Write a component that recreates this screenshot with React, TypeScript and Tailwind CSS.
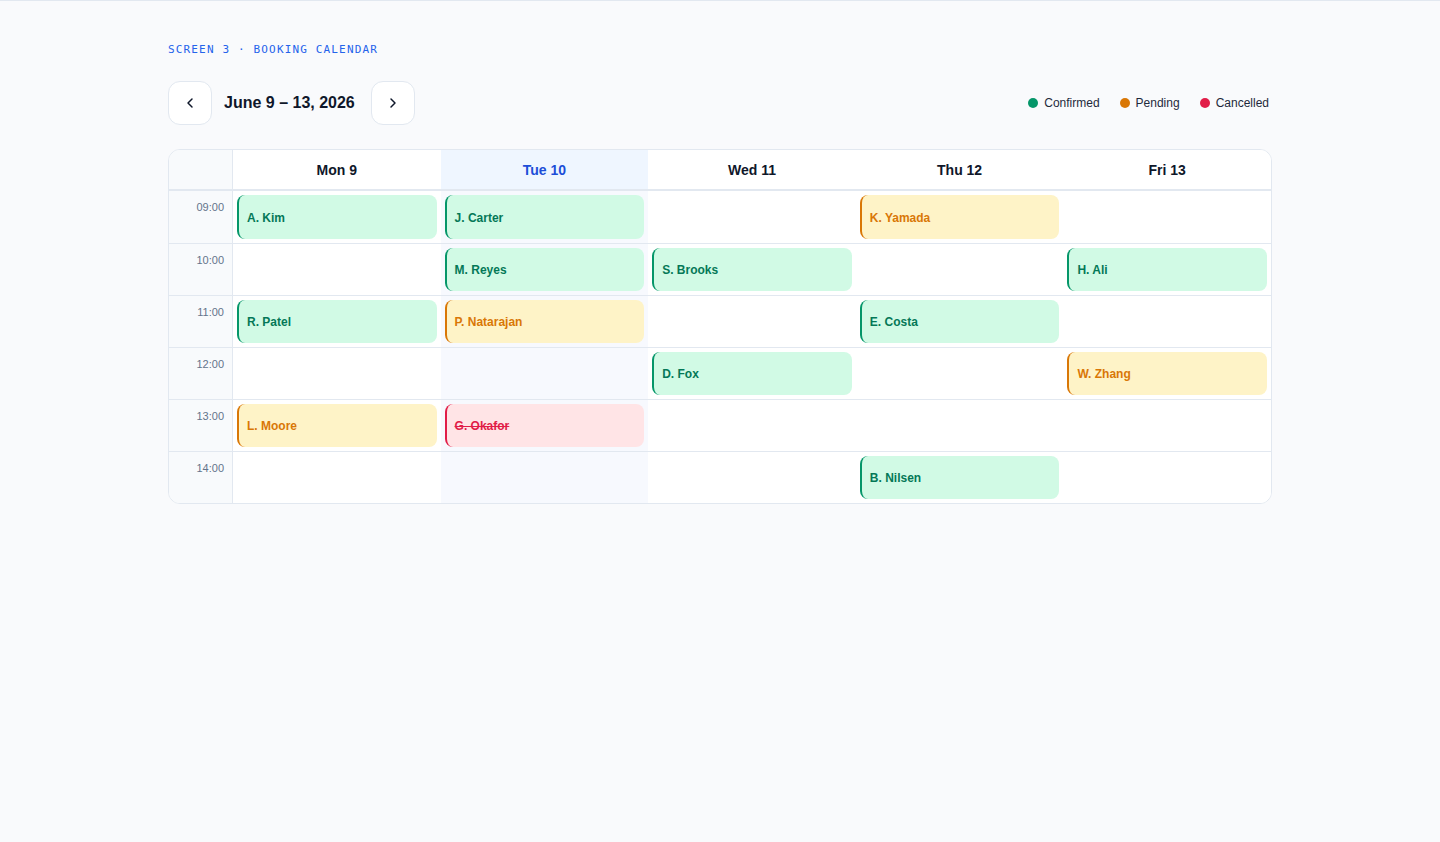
import { ChevronLeft, ChevronRight } from "lucide-react";

type Status = "confirmed" | "pending" | "cancelled";

type Booking = { day: number; hour: number; name: string; status: Status };

const DAYS = ["Mon 9", "Tue 10", "Wed 11", "Thu 12", "Fri 13"];
const TODAY = 1;
const HOURS = ["09:00", "10:00", "11:00", "12:00", "13:00", "14:00"];

const BOOKINGS: Booking[] = [
  { day: 0, hour: 0, name: "A. Kim", status: "confirmed" },
  { day: 1, hour: 0, name: "J. Carter", status: "confirmed" },
  { day: 3, hour: 0, name: "K. Yamada", status: "pending" },
  { day: 1, hour: 1, name: "M. Reyes", status: "confirmed" },
  { day: 2, hour: 1, name: "S. Brooks", status: "confirmed" },
  { day: 4, hour: 1, name: "H. Ali", status: "confirmed" },
  { day: 0, hour: 2, name: "R. Patel", status: "confirmed" },
  { day: 1, hour: 2, name: "P. Natarajan", status: "pending" },
  { day: 3, hour: 2, name: "E. Costa", status: "confirmed" },
  { day: 2, hour: 3, name: "D. Fox", status: "confirmed" },
  { day: 4, hour: 3, name: "W. Zhang", status: "pending" },
  { day: 0, hour: 4, name: "L. Moore", status: "pending" },
  { day: 1, hour: 4, name: "G. Okafor", status: "cancelled" },
  { day: 3, hour: 5, name: "B. Nilsen", status: "confirmed" },
];

const CARD: Record<Status, string> = {
  confirmed: "border-[#059669] bg-[#d1fae5] text-[#047857]",
  pending: "border-[#d97706] bg-[#fef3c7] text-[#d97706]",
  cancelled: "border-[#e11d48] bg-[#ffe4e6] text-[#e11d48] line-through",
};

const LEGEND: { label: string; dot: string }[] = [
  { label: "Confirmed", dot: "bg-[#059669]" },
  { label: "Pending", dot: "bg-[#d97706]" },
  { label: "Cancelled", dot: "bg-[#e11d48]" },
];

function Cell({ day, hour }: { day: number; hour: number }) {
  const booking = BOOKINGS.find((b) => b.day === day && b.hour === hour);
  return (
    <div className={`flex p-1 ${day === TODAY ? "bg-[#f7f9fe]" : "bg-white"}`}>
      {booking ? (
        <div
          className={`flex flex-1 items-center rounded-lg border-l-2 px-[8px] pt-px text-[12px] font-bold ${CARD[booking.status]}`}
        >
          {booking.name}
        </div>
      ) : null}
    </div>
  );
}

export default function App() {
  return (
    <div className="min-h-screen border-t border-[#e2e8f0] bg-[#f9fafc] font-['Liberation_Sans',Arial,sans-serif] text-[#0f172a]">
      <div className="mx-auto w-[1104px] pt-[42px]">
        <p className="font-['DejaVu_Sans_Mono',monospace] text-[11px] leading-[14px] tracking-[0.105em] text-[#2563eb]">
          SCREEN 3 · BOOKING CALENDAR
        </p>

        <div className="mt-[24px] flex items-center justify-between">
          <div className="flex items-center gap-3">
            <button
              type="button"
              className="flex h-[44px] w-[44px] items-center justify-center rounded-xl border border-[#e2e8f0] bg-white"
              aria-label="Previous week"
            >
              <ChevronLeft className="h-4 w-4" strokeWidth={2.2} />
            </button>
            <h1 className="mr-1 text-[16px] font-bold">June 9 – 13, 2026</h1>
            <button
              type="button"
              className="flex h-[44px] w-[44px] items-center justify-center rounded-xl border border-[#e2e8f0] bg-white"
              aria-label="Next week"
            >
              <ChevronRight className="h-4 w-4" strokeWidth={2.2} />
            </button>
          </div>
          <div className="flex items-center gap-5 pr-[3px] text-[12px] text-[#1e293b]">
            {LEGEND.map((l) => (
              <span key={l.label} className="flex items-center gap-[6px]">
                <span className={`h-[10px] w-[10px] rounded-full ${l.dot}`} />
                {l.label}
              </span>
            ))}
          </div>
        </div>

        <div className="mt-[24px] overflow-hidden rounded-xl border border-[#e2e8f0] bg-white">
          <div className="grid h-[41px] grid-cols-[64px_repeat(5,1fr)] border-b-2 border-[#e2e8f0]">
            <div className="border-r border-[#e2e8f0] bg-[#f8fafc]" />
            {DAYS.map((d, i) => (
              <div
                key={d}
                className={`flex items-center justify-center pt-[2px] text-[14px] font-bold ${
                  i === TODAY ? "bg-[#eff6ff] text-[#1d4ed8]" : "bg-white"
                }`}
              >
                {d}
              </div>
            ))}
          </div>
          {HOURS.map((h, hour) => (
            <div
              key={h}
              className={`grid grid-cols-[64px_repeat(5,1fr)] ${
                hour > 0 ? "h-[52px] border-t border-[#e2e8f0]" : "h-[52px]"
              }`}
            >
              <div className="border-r border-[#e2e8f0] bg-[#f8fafc] pr-[8px] pt-[10px] text-right text-[11px] leading-[13px] text-[#64748b]">
                {h}
              </div>
              {DAYS.map((_, day) => (
                <Cell key={day} day={day} hour={hour} />
              ))}
            </div>
          ))}
        </div>
      </div>
    </div>
  );
}
